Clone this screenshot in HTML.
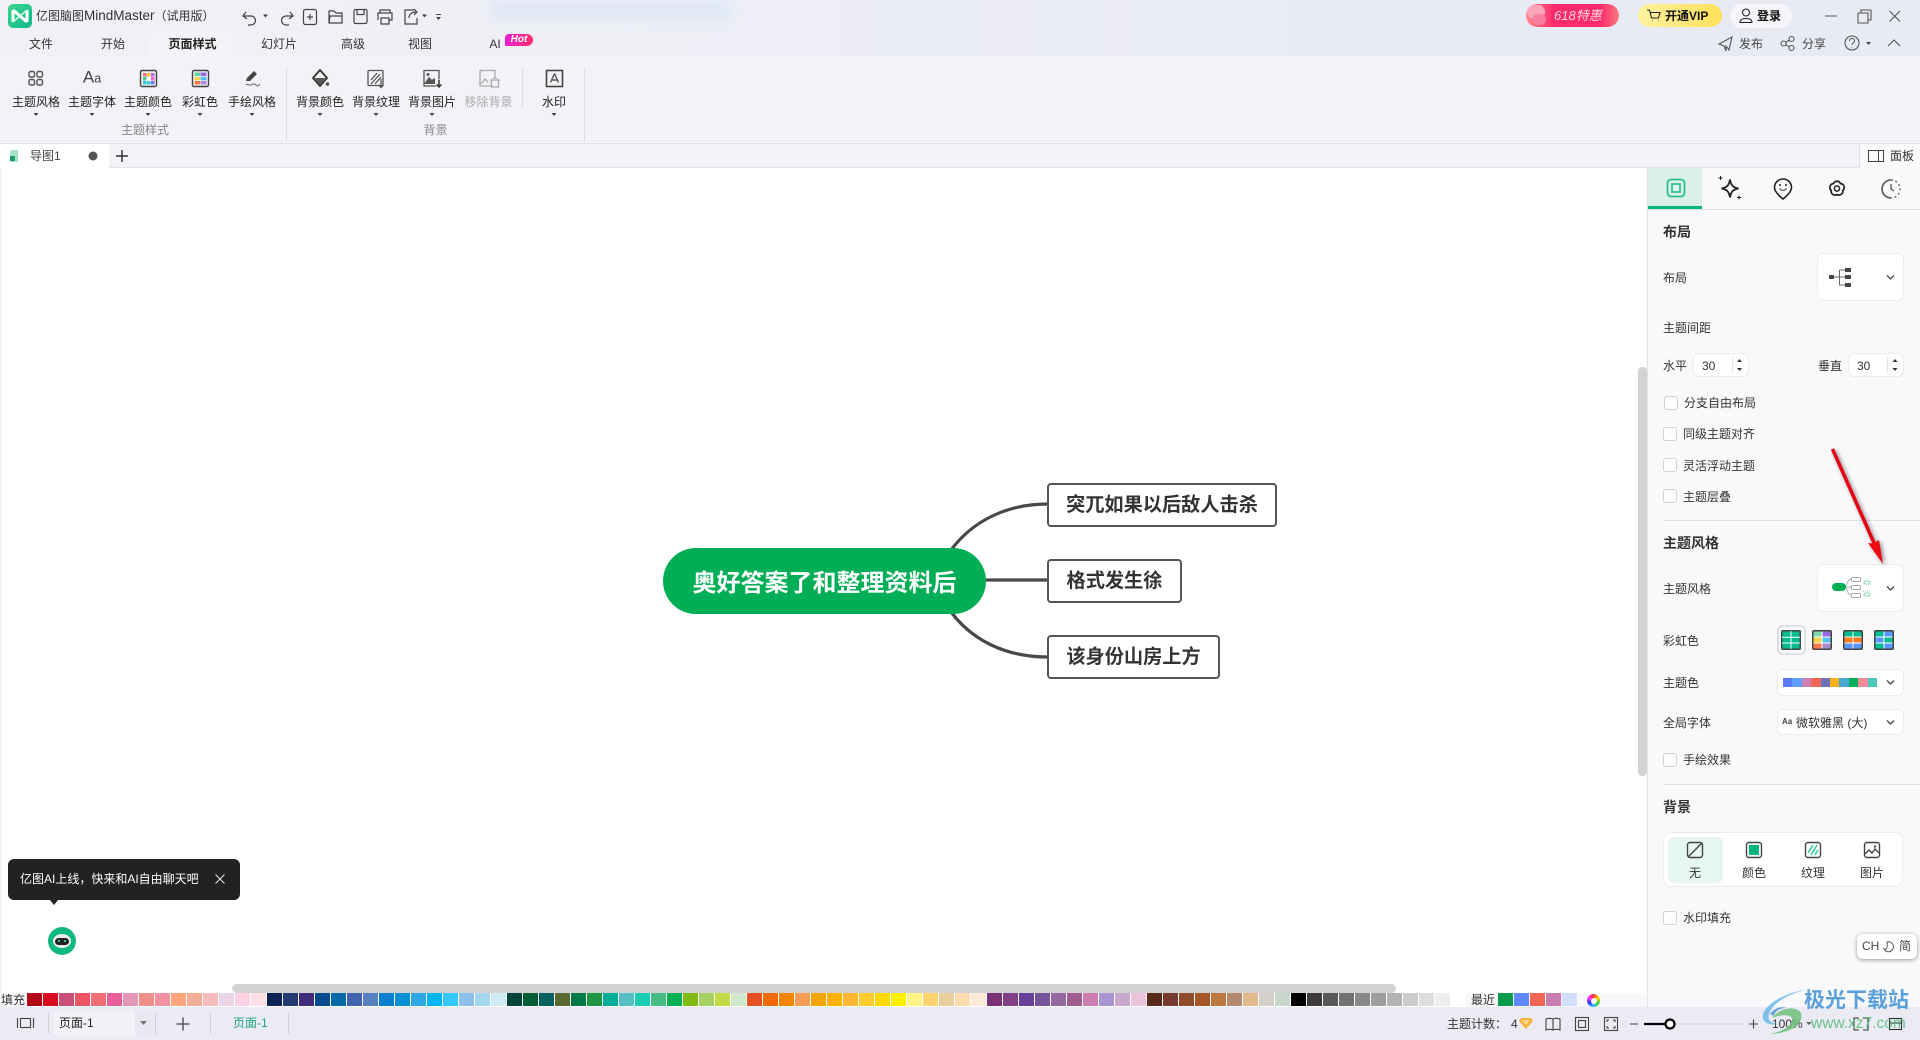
<!DOCTYPE html>
<html lang="zh"><head><meta charset="utf-8"><title>亿图脑图MindMaster</title>
<style>
*{box-sizing:border-box}
html,body{margin:0;padding:0;width:1920px;height:1040px;overflow:hidden;background:#fff;font-family:"Liberation Sans","Noto Sans CJK SC",sans-serif;font-size:12px;color:#333}
.b{position:absolute}
.t{position:absolute;white-space:nowrap;line-height:16px;transform:translateY(-50%)}
.c{position:absolute;white-space:nowrap;line-height:16px;transform:translate(-50%,-50%)}
.sw{position:absolute;left:27px;top:993px;height:13px;display:flex}
.sw i{display:block;width:15px;height:13px;margin-right:1px;flex:none}
.cb{position:absolute;width:14px;height:14px;background:#fff;border:1px solid #d2d2d6;border-radius:3px}
.dd{position:absolute;background:#fff;border:1px solid #ececf0;border-radius:6px}
.node{position:absolute;background:#fff;border:2px solid #555;border-radius:4px;font-weight:700;font-size:19.2px;color:#333;line-height:42px;height:44px;text-align:center;white-space:nowrap}
.h{font-size:14px;font-weight:700;color:#333}
svg.o{position:absolute;left:0;top:0;overflow:visible}
</style></head><body>
<!-- title/tab band -->
<div class="b" style="left:0;top:0;width:1920px;height:56px;background:linear-gradient(90deg,#f0f0f5 0,#eff0f6 30%,#e9ebf4 70%,#e9ebf4 100%)"></div>
<div class="b" style="left:490px;top:0;width:240px;height:20px;background:#dfe7f6;filter:blur(6px)"></div>
<div class="b" style="left:0;top:56px;width:1920px;height:88px;background:#f2f2f7;border-bottom:1px solid #e0e0e4"></div>
<div class="b" style="left:0;top:144px;width:1920px;height:24px;background:#f2f2f7;border-bottom:1px solid #e2e2e6"></div>
<div class="b" style="left:147px;top:32px;width:92px;height:24px;background:#f2f2f7;border-radius:6px 6px 0 0"></div>
<div class="b" style="left:0;top:144px;width:109px;height:24px;background:#fff"></div>
<div class="b" style="left:1859px;top:144px;width:61px;height:24px;background:#fafafc;border-left:1px solid #e2e2e6"></div>
<!-- logo -->
<div class="b" style="left:8px;top:4px;width:24px;height:24px;border-radius:5px;background:linear-gradient(135deg,#3dd68c,#10b58a)"></div>
<div class="t" style="left:36px;top:16px;color:#333">亿图脑图<span style="font-size:13.500px">MindMaster</span>（试用版）</div>
<!-- menu tabs -->
<div class="c" style="left:41px;top:44px">文件</div>
<div class="c" style="left:113px;top:44px">开始</div>
<div class="c" style="left:192.5px;top:44px;font-weight:700;color:#222">页面样式</div>
<div class="c" style="left:279px;top:44px">幻灯片</div>
<div class="c" style="left:353px;top:44px">高级</div>
<div class="c" style="left:420px;top:44px">视图</div>
<div class="c" style="left:495px;top:44px">AI</div>
<div class="b" style="left:505px;top:34px;width:28px;height:12px;border-radius:4px 6px 6px 0;background:linear-gradient(90deg,#e81fd0,#ff2f6a);color:#fff;font:italic 700 10px/12px 'Liberation Sans',sans-serif;text-align:center">Hot</div>
<!-- ribbon labels -->
<div class="c" style="left:36px;top:102px;color:#222">主题风格</div>
<div class="c" style="left:92px;top:102px;color:#222">主题字体</div>
<div class="c" style="left:148px;top:102px;color:#222">主题颜色</div>
<div class="c" style="left:200px;top:102px;color:#222">彩虹色</div>
<div class="c" style="left:252px;top:102px;color:#222">手绘风格</div>
<div class="c" style="left:320px;top:102px;color:#222">背景颜色</div>
<div class="c" style="left:376px;top:102px;color:#222">背景纹理</div>
<div class="c" style="left:432px;top:102px;color:#222">背景图片</div>
<div class="c" style="left:488.5px;top:102px;color:#aaa">移除背景</div>
<div class="c" style="left:554px;top:102px;color:#222">水印</div>
<div class="c" style="left:145px;top:130px;color:#888">主题样式</div>
<div class="c" style="left:435.5px;top:130px;color:#888">背景</div>
<div class="c" style="left:92px;top:78px;font-size:17px;color:#444;line-height:20px">A<span style="font-size:12.500px">a</span></div>
<!-- doc tab -->
<div class="t" style="left:30px;top:156px;color:#444">导图1</div>
<div class="t" style="left:1890px;top:156px;color:#333">面板</div>
<!-- top right -->
<div class="b" style="left:1526px;top:4px;width:93px;height:23px;border-radius:12px;background:linear-gradient(90deg,#f88 0,#fb2a6c 30%,#fb2a6c 80%,#fb7a80 100%)"></div>
<div class="b" style="left:1527px;top:5px;width:18px;height:14px;border-radius:9px;background:#fba6ba"></div>
<div class="b" style="left:1532px;top:14px;width:14px;height:11px;border-radius:7px;background:#f97f9e"></div>
<div class="t" style="left:1554px;top:16px;color:#ffd3d8;font-size:13px;font-style:italic">618特惠</div>
<div class="b" style="left:1637.5px;top:4px;width:84.5px;height:23px;border-radius:12px;background:linear-gradient(90deg,#fff2a0,#ffe05a)"></div>
<div class="t" style="left:1665px;top:16px;font-weight:700;color:#111">开通VIP</div>
<div class="b" style="left:1730px;top:4px;width:62px;height:24px;border-radius:12px;background:#f6f6fa"></div>
<div class="t" style="left:1757px;top:16px;font-weight:700;color:#111">登录</div>
<div class="t" style="left:1739px;top:44px;color:#444">发布</div>
<div class="t" style="left:1802px;top:44px;color:#444">分享</div>
<!-- canvas strip -->
<div class="b" style="left:0;top:168px;width:2px;height:825px;background:#f2f2f7"></div>
<!-- right panel -->
<div class="b" style="left:1647px;top:168px;width:273px;height:839px;background:#f9f9fb;border-left:1px solid #e2e2e6"></div>
<div class="b" style="left:1648px;top:168px;width:272px;height:42px;border-bottom:1px solid #e2e2e6"></div>
<div class="b" style="left:1648px;top:168px;width:54px;height:41px;background:#dcf0ea;border-bottom:3px solid #00b67c"></div>
<div class="b" style="left:1638px;top:367px;width:9px;height:409px;background:#d3d3d4;border-radius:4px"></div>
<div class="t h" style="left:1663px;top:232px">布局</div>
<div class="t" style="left:1663px;top:278px">布局</div>
<div class="dd" style="left:1817px;top:253px;width:87px;height:48px"></div>
<div class="t" style="left:1663px;top:328px">主题间距</div>
<div class="t" style="left:1663px;top:366px">水平</div>
<div class="dd" style="left:1693px;top:353px;width:56px;height:24px"></div>
<div class="t" style="left:1702px;top:365.500px;font-size:12px">30</div>
<div class="t" style="left:1818px;top:366px">垂直</div>
<div class="dd" style="left:1848px;top:353px;width:56px;height:24px"></div>
<div class="t" style="left:1857px;top:365.500px">30</div>
<div class="cb" style="left:1664px;top:396px"></div><div class="t" style="left:1684px;top:403px">分支自由布局</div>
<div class="cb" style="left:1663px;top:427px"></div><div class="t" style="left:1683px;top:434px">同级主题对齐</div>
<div class="cb" style="left:1663px;top:458px"></div><div class="t" style="left:1683px;top:466px">灵活浮动主题</div>
<div class="cb" style="left:1663px;top:489px"></div><div class="t" style="left:1683px;top:497px">主题层叠</div>
<div class="b" style="left:1663px;top:520px;width:257px;height:1px;background:#e2e2e6"></div>
<div class="t h" style="left:1663px;top:543px">主题风格</div>
<div class="t" style="left:1663px;top:589px">主题风格</div>
<div class="dd" style="left:1817px;top:564px;width:87px;height:48px"></div>
<div class="t" style="left:1663px;top:641px">彩虹色</div>
<div class="b" style="left:1777px;top:625px;width:29px;height:30px;border:2px solid #e0e0e4;border-radius:5px"></div>
<div class="t" style="left:1663px;top:683px">主题色</div>
<div class="dd" style="left:1777px;top:669px;width:127px;height:27px"></div>
<div class="b" style="left:1783px;top:678px;width:94px;height:9px;display:flex"><i style="flex:1;background:#5b7cff"></i><i style="flex:1;background:#5f9fff"></i><i style="flex:1;background:#cc7fb4"></i><i style="flex:1;background:#f0675a"></i><i style="flex:1;background:#6a72b8"></i><i style="flex:1;background:#fdb01a"></i><i style="flex:1;background:#48a8cf"></i><i style="flex:1;background:#00af5b"></i><i style="flex:1;background:#f58a9b"></i><i style="flex:1;background:#4cc8b8"></i></div>
<div class="t" style="left:1663px;top:723px">全局字体</div>
<div class="dd" style="left:1777px;top:709px;width:127px;height:26px"></div>
<div class="t" style="left:1782px;top:722px;font-size:8px;font-weight:700;color:#444">Aa</div>
<div class="t" style="left:1796px;top:723px;color:#333">微软雅黑 (大)</div>
<div class="cb" style="left:1663px;top:753px"></div><div class="t" style="left:1683px;top:760px">手绘效果</div>
<div class="b" style="left:1663px;top:784px;width:257px;height:1px;background:#e2e2e6"></div>
<div class="t h" style="left:1663px;top:807px">背景</div>
<div class="dd" style="left:1663px;top:832px;width:240px;height:55px;border-radius:8px"></div>
<div class="b" style="left:1668px;top:837px;width:55px;height:46px;background:#e6f7f1;border-radius:6px"></div>
<div class="c" style="left:1695px;top:873px">无</div>
<div class="c" style="left:1754px;top:873px">颜色</div>
<div class="c" style="left:1813px;top:873px">纹理</div>
<div class="c" style="left:1872px;top:873px">图片</div>
<div class="cb" style="left:1663px;top:911px"></div><div class="t" style="left:1683px;top:918px">水印填充</div>
<div class="b" style="left:1857px;top:934px;width:60px;height:25px;background:#fff;border-radius:6px;box-shadow:0 1px 4px rgba(0,0,0,.4)"></div>
<div class="t" style="left:1862px;top:946px;color:#444">CH</div>
<div class="t" style="left:1899px;top:946px;color:#444">简</div>
<!-- horizontal scroll -->
<div class="b" style="left:232px;top:984px;width:1164px;height:9px;background:#d3d3d4;border-radius:5px"></div>
<!-- swatches -->
<div class="b" style="left:0;top:993px;width:1647px;height:14px;background:#fff"></div>
<div class="b" style="left:0;top:993px;width:27px;height:14px;background:#f6f6f9"></div>
<div class="b" style="left:1466px;top:993px;width:181px;height:14px;background:#f8f8fa"></div>
<div class="sw">
<i style="background:#b00816"></i><i style="background:#d80d20"></i><i style="background:#c94f78"></i><i style="background:#ee5564"></i><i style="background:#f06f75"></i><i style="background:#e85e9a"></i><i style="background:#e597b6"></i><i style="background:#f08f8a"></i><i style="background:#f291a0"></i><i style="background:#ffa47c"></i><i style="background:#f2ad97"></i><i style="background:#f7bdbc"></i><i style="background:#ead6e8"></i><i style="background:#fdd3e4"></i><i style="background:#fde0e6"></i>
<i style="background:#0e2454"></i><i style="background:#243a73"></i><i style="background:#402c7a"></i><i style="background:#084a8e"></i><i style="background:#066aa8"></i><i style="background:#4263ae"></i><i style="background:#5780c0"></i><i style="background:#0a7fd0"></i><i style="background:#068fd2"></i><i style="background:#2ea9e5"></i><i style="background:#00b7f4"></i><i style="background:#33c8fa"></i><i style="background:#8cc0ea"></i><i style="background:#a3d8f0"></i><i style="background:#cfeaf5"></i>
<i style="background:#00443a"></i><i style="background:#025c34"></i><i style="background:#04615e"></i><i style="background:#59692f"></i><i style="background:#007a46"></i><i style="background:#1e9642"></i><i style="background:#00ae99"></i><i style="background:#55bfc3"></i><i style="background:#18cdb2"></i><i style="background:#45bd83"></i><i style="background:#00b152"></i><i style="background:#82bb10"></i><i style="background:#a6d164"></i><i style="background:#c2da46"></i><i style="background:#cfe8cb"></i>
<i style="background:#e55122"></i><i style="background:#f06a00"></i><i style="background:#f38500"></i><i style="background:#f59d56"></i><i style="background:#f3a600"></i><i style="background:#ffb000"></i><i style="background:#ffb632"></i><i style="background:#ffcb2e"></i><i style="background:#ffd800"></i><i style="background:#fff000"></i><i style="background:#fff384"></i><i style="background:#ffd46e"></i><i style="background:#ecce9c"></i><i style="background:#fedcb0"></i><i style="background:#fde9d6"></i>
<i style="background:#7b3176"></i><i style="background:#833f84"></i><i style="background:#684099"></i><i style="background:#76549c"></i><i style="background:#96689f"></i><i style="background:#9f5c8e"></i><i style="background:#cc7eb0"></i><i style="background:#a895d2"></i><i style="background:#c8a9cc"></i><i style="background:#ecc3da"></i>
<i style="background:#58281a"></i><i style="background:#763a2e"></i><i style="background:#8f4a2a"></i><i style="background:#a85528"></i><i style="background:#bd7840"></i><i style="background:#b38a70"></i><i style="background:#e0ba8c"></i><i style="background:#d5cfca"></i><i style="background:#c8d6cc"></i>
<i style="background:#000"></i><i style="background:#3f3a3a"></i><i style="background:#595959"></i><i style="background:#727272"></i><i style="background:#888"></i><i style="background:#9e9e9e"></i><i style="background:#b3b3b3"></i><i style="background:#ccc"></i><i style="background:#dedede"></i><i style="background:#eee"></i>
</div>
<div class="sw" style="left:1498px"><i style="background:#069c4c"></i><i style="background:#5f88ff"></i><i style="background:#f26753"></i><i style="background:#c97cb0"></i><i style="background:#d2dffb"></i></div>
<div class="t" style="left:1px;top:1000px;color:#333">填充</div>
<div class="t" style="left:1471px;top:1000px;color:#333">最近</div>
<div class="b" style="left:1587px;top:994px;width:13px;height:13px;border-radius:50%;background:conic-gradient(#f33,#fc0,#3c3,#3cf,#33f,#f3f,#f33)"></div>
<div class="b" style="left:1591px;top:998px;width:6px;height:6px;border-radius:50%;background:#fff"></div>
<!-- bottom bar -->
<div class="b" style="left:0;top:1007px;width:1920px;height:33px;background:#eaebf4"></div>
<div class="b" style="left:53px;top:1011px;width:82px;height:25px;background:#f2f2f6;border-radius:4px 0 0 4px"></div>
<div class="b" style="left:135px;top:1011px;width:16px;height:25px;background:#e8e8f1;border-radius:0 4px 4px 0"></div>
<div class="t" style="left:59px;top:1023px;color:#222">页面-1</div>
<div class="t" style="left:233px;top:1023px;color:#21a67a">页面-1</div>
<div class="t" style="left:1447px;top:1024px;color:#333">主题计数：</div>
<div class="t" style="left:1511px;top:1024px;color:#333">4</div>
<div class="t" style="left:1772px;top:1024px;color:#333">100%</div>
<!-- mind map -->
<svg class="o" width="1920" height="1040" viewBox="0 0 1920 1040" fill="none">
<g stroke="#484848" stroke-width="3.2" fill="none">
<path d="M951 550C972 522 1005 504 1048 504"/>
<path d="M985 580H1048"/>
<path d="M951 612C972 640 1005 657 1048 657"/>
</g>
<!-- logo glyph -->
<path d="M13 10V22M27 10V22M13 10L27 22" stroke="#fff" stroke-width="3" fill="none"/>
<path d="M13 22L27 10" stroke="#c9ffe6" stroke-width="1.500"/>
<!-- quick access -->
<g stroke="#444" stroke-width="1.2" fill="none">
<path d="M246 12l-3 4 4 3M243 16h8a4.5 4.5 0 0 1 0 9h-3"/>
<path d="M290 12l3 4-4 3M293 16h-7a4.5 4.5 0 0 0 0 9h3"/>
<rect x="303.5" y="9.5" width="13" height="15" rx="2"/><path d="M307 17h6M310 14v6"/>
<path d="M329 23V11h5l2 2h6v10z"/><path d="M329 23l1-7h12"/>
<rect x="354" y="9.5" width="13" height="14" rx="1.5"/><path d="M357 9.5v5h7v-5"/>
<path d="M380 13v-3h10v3M378 20v-7h14v7h-3M381 18h8v6h-8z"/>
<path d="M414 10h-9v14h12v-6M409 18c0-4 3-6 7-6M414 9l3 3-3 3"/>
</g>
<path d="M263 14.5h5l-2.500 3zM422 14.500h5l-2.500 3zM436 14h5v1h-5zM436 17h5l-2.500 3z" fill="#444"/>
<!-- ribbon icons -->
<g stroke="#555" stroke-width="1.4" fill="none">
<rect x="29" y="71.500" width="5.500" height="5.500" rx="1.500"/><rect x="37" y="71.500" width="5.500" height="5.500" rx="1.500"/><rect x="29" y="79.500" width="5.500" height="5.500" rx="1.500"/><rect x="37" y="79.500" width="5.500" height="5.500" rx="1.500"/>
<rect x="140.500" y="70.500" width="16" height="16" rx="1.500" stroke="#444"/>
<rect x="192.500" y="70.500" width="16" height="16" rx="1.500" stroke="#444"/>
</g>
<rect x="143" y="73" width="3.500" height="3.500" fill="#ff6b8a"/><rect x="147" y="73" width="3.500" height="3.500" fill="#ffc23c"/><rect x="151" y="73" width="3.500" height="3.500" fill="#b06be8"/>
<rect x="143" y="77" width="3.500" height="3.500" fill="#4fd08a"/><rect x="147" y="77" width="3.500" height="3.500" fill="#fff"/><rect x="151" y="77" width="3.500" height="3.500" fill="#e66bd0"/>
<rect x="143" y="81" width="3.500" height="3.500" fill="#33c8e8"/><rect x="147" y="81" width="3.500" height="3.500" fill="#3bd1c0"/><rect x="151" y="81" width="3.500" height="3.500" fill="#7a7af0"/>
<rect x="194.500" y="72.500" width="5.500" height="3.500" fill="#5fd6a0"/><rect x="200.500" y="72.500" width="6" height="3.500" fill="#9a6be0"/>
<rect x="194.500" y="76.800" width="5.500" height="3.500" fill="#f4d24a"/><rect x="200.500" y="76.800" width="6" height="3.500" fill="#4fc0f0"/>
<rect x="194.500" y="81" width="5.500" height="3.500" fill="#ff7a4a"/><rect x="200.500" y="81" width="6" height="3.500" fill="#b08ad8"/>
<path d="M246 81l1-3 7-7 3 3-7 7z" fill="#444"/>
<path d="M246 85c2-2 3 1 5 0s3-2 5 0 3 0 4-1" stroke="#777" stroke-width="1.200" fill="none"/>
<path d="M320 70l7 8-7 8-7-8z" stroke="#333" stroke-width="1.800" fill="none"/>
<path d="M314.500 78h11L320 84.500z" fill="#555"/>
<circle cx="327.500" cy="84" r="1.800" fill="#555"/>
<g stroke="#555" stroke-width="1.300" fill="none">
<rect x="368" y="70.500" width="15" height="15" rx="1"/>
<path d="M371 80l6-7M371 84l9-10M375 84l6-7"/>
<path d="M381 79v8M378.500 85l2.500 2.500 2.500-2.500"/>
</g>
<g stroke="#555" stroke-width="1.300" fill="none">
<path d="M436 86h-12V70.500h15v9"/><path d="M426 83l3-5 3 3 2-2"/>
</g>
<circle cx="428" cy="74.500" r="1.500" fill="#555"/>
<path d="M424 84l5-7 3 3 3-2v6z" fill="#555"/>
<path d="M439 80v7M436.500 84.500l2.500 2.500 2.500-2.500" stroke="#333" stroke-width="1.500" fill="none"/>
<g stroke="#aaa" stroke-width="1.300" fill="none">
<path d="M492 86h-12V70.500h15v7"/><path d="M481 84l4-5 3 3"/>
<path d="M490 80h10M491.500 80v7h7v-7M493 78h4"/>
</g>
<rect x="546.500" y="70.500" width="16" height="16" stroke="#444" stroke-width="1.600" fill="none"/>
<path d="M554.500 73.500l-4 9M554.500 73.500l4 9M551.500 80h6" stroke="#555" stroke-width="1.400" fill="none"/>
<path d="M33.500 113h5l-2.500 3zM89.500 113h5l-2.500 3zM145.500 113h5l-2.500 3zM197.500 113h5l-2.500 3zM249.500 113h5l-2.500 3zM317.500 113h5l-2.500 3zM373.500 113h5l-2.500 3zM429.500 113h5l-2.500 3zM551.500 113h5l-2.500 3z" fill="#444"/>
<path d="M286.500 67v75M584.500 67v75M522.500 67v41" stroke="#dedee2"/>
<!-- doc tab -->
<path d="M11 150h7v12h-8v-8z" fill="#a5e3c4"/><rect x="10" y="156" width="5" height="5" fill="#1f9e6a"/>
<circle cx="93" cy="156" r="4.500" fill="#555"/>
<path d="M116 156h12M122 150v12" stroke="#333" stroke-width="1.500"/>
<!-- 面板 icon -->
<rect x="1868.500" y="150.500" width="15" height="11" stroke="#444" fill="none"/><path d="M1878.500 150.500v11" stroke="#444"/>
<!-- top-right icons -->
<g stroke="#222" stroke-width="1.100" fill="none">
<path d="M1647 10h2.500l2 8h7l1.500-5.500h-10M1652 20.500h.5M1658 20.500h.5"/>
<circle cx="1746" cy="12.500" r="3.500"/><path d="M1740 22.500c0-3 2-4 6-4s6 1 6 4z"/>
</g>
<g stroke="#555" stroke-width="1.100" fill="none">
<path d="M1825 16h12M1858 13h10v10h-10zM1861 13v-3h10v10h-3M1889.500 11l10.500 10.500M1900 11l-10.500 10.500"/>
<path d="M1719 44l13-7-3 13-3-4v5l-2-5z"/>
<circle cx="1783.500" cy="43.500" r="2.500"/><circle cx="1791.500" cy="39" r="2.500"/><circle cx="1791.500" cy="48" r="2.500"/><path d="M1785.500 42.500l4-2.500M1785.500 44.500l4 2.500"/>
<circle cx="1852" cy="43" r="7"/><path d="M1849.500 41c0-3.500 5-3.500 5 0 0 2-2.500 2-2.500 4M1852 47v.5"/>
<path d="M1888 46l6-6 6 6"/>
</g>
<path d="M1866 42h5l-2.500 3z" fill="#444"/>
<!-- panel tabs -->
<rect x="1667.500" y="179.500" width="17" height="17" rx="3.500" stroke="#14b98a" stroke-width="1.600" fill="none"/>
<rect x="1672" y="184" width="8" height="8" stroke="#14b98a" stroke-width="1.500" fill="none"/>
<path d="M1730 179.500c1 6 3 8 8.500 9-5.500 1-7.500 3-8.500 9-1-6-3-8-8.500-9 5.500-1 7.500-3 8.500-9z" stroke="#222" stroke-width="1.800" fill="none"/>
<path d="M1718.500 178h4M1720.500 176v4M1737 197.500h4M1739 195.500v4" stroke="#222"/>
<path d="M1783 199c-5-4-8.500-8-8.500-11.500a8.500 8.500 0 0 1 17 0c0 3.500-3.500 7.500-8.500 11.500z" stroke="#222" stroke-width="1.600" fill="none"/>
<path d="M1779.500 188.500c1.800 2.400 5.200 2.400 7 0" stroke="#222" fill="none"/><circle cx="1780" cy="185" r="1" fill="#222"/><circle cx="1786" cy="185" r="1" fill="#222"/>
<path d="M1833.500 183.600A3.800 3.800 0 0 1 1840.500 183.600A3.800 3.800 0 0 1 1842.700 190.400A3.800 3.800 0 0 1 1837 194.500A3.800 3.800 0 0 1 1831.300 190.400A3.800 3.800 0 0 1 1833.500 183.600Z" stroke="#222" stroke-width="1.700" fill="none"/>
<circle cx="1837" cy="188.500" r="2.600" stroke="#222" stroke-width="1.500" fill="none"/>
<path d="M1891 180a9 9 0 0 0 0 18" stroke="#555" stroke-width="1.600" fill="none"/>
<path d="M1891 180a9 9 0 0 1 0 18" stroke="#777" stroke-width="1.600" stroke-dasharray="2 2.500" fill="none"/>
<path d="M1891 184v5l3 2" stroke="#555" stroke-width="1.300" fill="none"/>
<!-- layout icon -->
<rect x="1829" y="275" width="5" height="4" fill="#444"/><rect x="1845" y="268" width="6" height="4" fill="#444"/><rect x="1845" y="275" width="6" height="4" fill="#444"/><rect x="1845" y="283" width="6" height="4" fill="#444"/>
<path d="M1834 277h11M1839.500 270h5.500M1839.500 270v15h5.500" stroke="#666" fill="none"/>
<!-- chevrons -->
<g stroke="#444" stroke-width="1.300" fill="none">
<path d="M1887 275.500l3.500 3.500 3.500-3.500M1887 586.500l3.500 3.500 3.500-3.500M1887 680.500l3.500 3.500 3.500-3.500M1887 720.500l3.500 3.500 3.500-3.500"/>
</g>
<path d="M1732.500 356v17M1887.500 356v17" stroke="#e6e6ea"/>
<path d="M1739.500 359l-2.500 3h5zM1739.500 371l-2.500-3h5zM1895 359l-2.500 3h5zM1895 371l-2.500-3h5z" fill="#333"/>
<!-- theme style thumb -->
<rect x="1832" y="583" width="14" height="8" rx="4" fill="#00ae55"/>
<g stroke="#aaa" fill="none">
<rect x="1851.500" y="577.500" width="9" height="4" rx="1" fill="#fff"/><rect x="1851.500" y="585.500" width="9" height="4" rx="1" fill="#fff"/><rect x="1851.500" y="593.500" width="9" height="4" rx="1" fill="#fff"/>
<path d="M1846 586c2-5 3-7 5-7M1846 587h5M1846 588c2 5 3 7 5 7"/>
</g>
<g stroke="#8fd8b4" fill="none"><rect x="1864" y="581" width="6" height="3" rx="1.500"/><rect x="1864" y="593" width="6" height="3" rx="1.500"/><path d="M1861 591h9" stroke-dasharray="1 1"/></g>
<!-- rainbow thumbs -->
<g>
<rect x="1781" y="630" width="20" height="20" rx="2" fill="#444"/><rect x="1782.500" y="631.500" width="17" height="17" fill="#00bd8f"/><path d="M1782 637.300h18M1782 643h18M1791 631v18" stroke="#fff" stroke-width="1"/>
<rect x="1812" y="630" width="20" height="20" rx="2" fill="#444"/><rect x="1813.500" y="631.500" width="17" height="17" fill="#fff"/><rect x="1813.500" y="631.500" width="8" height="5" fill="#7fd8a8"/><rect x="1822.500" y="631.500" width="8" height="5" fill="#9a6be0"/><rect x="1813.500" y="637.500" width="8" height="5" fill="#f2d24a"/><rect x="1822.500" y="637.500" width="8" height="5" fill="#5ac0f0"/><rect x="1813.500" y="643.500" width="8" height="5" fill="#ff7a4a"/><rect x="1822.500" y="643.500" width="8" height="5" fill="#a78ad0"/>
<rect x="1843" y="630" width="20" height="20" rx="2" fill="#444"/><rect x="1844.500" y="631.500" width="17" height="17" fill="#fff"/><rect x="1844.500" y="631.500" width="8" height="5" fill="#00bd8f"/><rect x="1853.500" y="631.500" width="8" height="5" fill="#00bd8f"/><rect x="1844.500" y="637.500" width="8" height="5" fill="#ff7a1a"/><rect x="1853.500" y="637.500" width="8" height="5" fill="#ff7a1a"/><rect x="1844.500" y="643.500" width="8" height="5" fill="#5a96ff"/><rect x="1853.500" y="643.500" width="8" height="5" fill="#5a96ff"/>
<rect x="1874" y="630" width="20" height="20" rx="2" fill="#444"/><rect x="1875.500" y="631.500" width="17" height="17" fill="#fff"/><rect x="1875.500" y="631.500" width="8" height="5" fill="#00bd8f"/><rect x="1884.500" y="631.500" width="8" height="5" fill="#5a96ff"/><rect x="1875.500" y="637.500" width="8" height="5" fill="#5a96ff"/><rect x="1884.500" y="637.500" width="8" height="5" fill="#00bd8f"/><rect x="1875.500" y="643.500" width="8" height="5" fill="#00bd8f"/><rect x="1884.500" y="643.500" width="8" height="5" fill="#5a96ff"/>
</g>
<!-- background icons -->
<g stroke="#444" stroke-width="1.400" fill="none">
<rect x="1687.500" y="842.500" width="15" height="15" rx="2.500"/><path d="M1688 857l14-14"/>
<rect x="1746.500" y="842.500" width="15" height="15" rx="2.500"/>
<rect x="1805.500" y="842.500" width="15" height="15" rx="2.500"/>
<rect x="1864.500" y="842.500" width="15" height="15" rx="2.500"/><path d="M1865 854l4-4 3 3 3-4 4 4"/>
</g>
<rect x="1749" y="845" width="10" height="10" fill="#00b67c"/>
<path d="M1808 853l5-8M1811 855l6-10M1815 855l3-5" stroke="#2fc89a" stroke-width="1.500" fill="none"/>
<circle cx="1875" cy="846.500" r="1.200" fill="#444"/>
<path d="M1887 942a5 5 0 1 1-3 7c2 1 4-1 3-7z" stroke="#555" fill="none"/>
<!-- bottom bar icons -->
<g stroke="#444" stroke-width="1.100" fill="none">
<path d="M17.500 1018v10M33.500 1018v10"/><rect x="20.500" y="1018.500" width="10" height="9"/>
<path d="M176.500 1024h13M183 1017.500v13" stroke-width="1.300"/>
<path d="M1546 1019c2-1 4-1 7 0v11c-3-1-5-1-7 0zM1553 1019c3-1 5-1 7 0v11c-2-1-4-1-7 0z"/>
<rect x="1575.500" y="1017.500" width="13" height="13"/><rect x="1578.500" y="1020.500" width="7" height="7"/>
<rect x="1604.500" y="1017.500" width="13" height="13"/><path d="M1607 1022v-2h2M1615 1022v-2h-2M1607 1026v2h2M1615 1026v2h-2"/>
<path d="M1630 1024h8M1749 1024h9M1753.500 1019.500v9"/>
<path d="M1856 1018h-2v12h2M1866 1018h2v12h-2M1855 1018h4M1863 1018h4M1855 1030h4M1863 1030h4" stroke="#333"/>
<rect x="1889.500" y="1018.500" width="12" height="11" stroke="#333"/><path d="M1889 1023h13" stroke="#333"/>
</g>
<path d="M140 1021h7l-3.500 4z" fill="#777"/>
<path d="M48.500 1013v21M155.500 1013v21M210.500 1013v21M288.500 1013v21" stroke="#d0d0d8"/>
<path d="M1521 1018h10l2 3-7 8-7-8z" fill="#fbb13a"/><path d="M1522 1020h8l-4 5z" fill="#fdd88a"/>
<path d="M1644 1024h100" stroke="#dfdfe3" stroke-width="2"/>
<path d="M1644 1024h26" stroke="#000" stroke-width="2.200"/>
<circle cx="1670" cy="1024" r="4.500" fill="#fff" stroke="#000" stroke-width="2.200"/>
<path d="M1806 1022h6l-3 3z" fill="#666"/>
<!-- red arrow -->
<g style="filter:drop-shadow(2px 2px 2px rgba(0,0,0,.45))">
<path d="M1832.500 449l42 95" stroke="#e60012" stroke-width="3.500" fill="none"/>
<path d="M1883 564l-15-21 5 .5 6-3.500z" fill="#ee0a14"/>
</g>
<!-- watermark logo -->
<path d="M1805 990c-16 2-38 12-42 24-2 8 6 12 14 10-6-1-10-4-8-10 4-12 20-20 36-24z" fill="#6ab8ea" opacity=".85"/>
<path d="M1772 1018c6-8 18-12 26-8 6 4 4 12-4 18-8 4-16 6-24 6 10-2 20-6 22-14 1-6-10-6-20-2z" fill="#6dc07a" opacity=".85"/>
<path d="M1770 1014c4-6 12-8 16-6-6 0-11 3-12 8z" fill="#4a90d0" opacity=".8"/>
</svg>
<div class="t" style="left:1804px;top:1001px;font-size:21px;font-weight:700;color:#4a96d8;opacity:.9;line-height:24px">极光下载站</div>
<div class="t" style="left:1811px;top:1024px;font-size:15.500px;color:#55bb77;opacity:.85;line-height:22px">www.xz7.com</div>
<!-- nodes -->
<div class="b" style="left:663px;top:548px;width:323px;height:66px;border-radius:33px;background:#00ae55;color:#fff;font-weight:700;font-size:24px;line-height:71px;text-align:center;white-space:nowrap">奥好答案了和整理资料后</div>
<div class="node" style="left:1047px;top:483px;width:230px">突兀如果以后敌人击杀</div>
<div class="node" style="left:1047px;top:559px;width:135px">格式发生徐</div>
<div class="node" style="left:1047px;top:635px;width:173px">该身份山房上方</div>
<!-- AI tip -->
<div class="b" style="left:8px;top:859px;width:232px;height:41px;background:#222;border-radius:6px"></div>
<div class="b" style="left:50px;top:900px;width:0;height:0;border-left:4px solid transparent;border-right:4px solid transparent;border-top:5px solid #222"></div>
<div class="t" style="left:20px;top:879px;color:#fff">亿图AI上线，快来和AI自由聊天吧</div>
<svg class="o" width="1920" height="1040" viewBox="0 0 1920 1040" fill="none" style="pointer-events:none">
<path d="M215.500 874.500l9 9M224.500 874.500l-9 9" stroke="#ddd" stroke-width="1.100"/>
<circle cx="62" cy="941" r="14" fill="#10b981"/>
<ellipse cx="62" cy="941" rx="9" ry="7" fill="#eee"/>
<rect x="55" y="938" width="14" height="7" rx="3.500" fill="#222"/>
<circle cx="59" cy="941" r="1" fill="#3df0b0"/><circle cx="65" cy="941" r="1" fill="#3df0b0"/>
</svg>
</body></html>
